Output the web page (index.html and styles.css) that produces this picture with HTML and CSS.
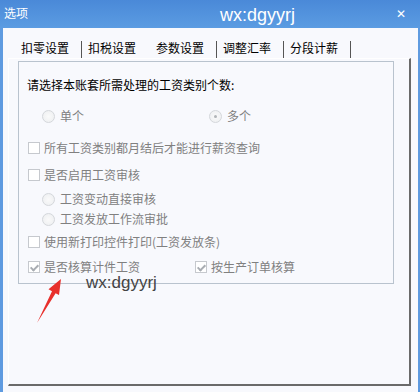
FILE: index.html
```html
<!DOCTYPE html>
<html lang="zh">
<head>
<meta charset="utf-8">
<link rel="stylesheet" href="styles.css">
</head>
<body>
<div class="window">
  <div class="titlebar">
    <span class="title">选项</span>
    <span class="title-mark">wx:dgyyrj</span>
    <span class="close">✕</span>
  </div>
  <div class="client">
    <div class="tabs">
      <span class="tab">扣零设置</span><span class="sep"></span>
      <span class="tab">扣税设置</span>
      <span class="tab active">参数设置</span><span class="sep"></span>
      <span class="tab">调整汇率</span><span class="sep"></span>
      <span class="tab">分段计薪</span><span class="sep"></span>
    </div>
    <div class="panel">
      <div class="group">
        <div class="row label">请选择本账套所需处理的工资类别个数:</div>
        <div class="row r-count">
          <span class="opt radio-opt"><span class="radio"></span>单个</span>
          <span class="opt radio-opt multi"><span class="radio on"></span>多个</span>
        </div>
        <div class="row r1"><span class="check"></span>所有工资类别都月结后才能进行薪资查询</div>
        <div class="row r2"><span class="check"></span>是否启用工资审核</div>
        <div class="row r3 radio-row"><span class="radio"></span>工资变动直接审核</div>
        <div class="row r4 radio-row"><span class="radio"></span>工资发放工作流审批</div>
        <div class="row r5"><span class="check"></span>使用新打印控件打印(工资发放条)</div>
        <div class="row r6">
          <span class="opt"><span class="check on"></span>是否核算计件工资</span>
          <span class="opt order"><span class="check on"></span>按生产订单核算</span>
        </div>
      </div>
    </div>
  </div>
  <div class="watermark">wx:dgyyrj</div>
  <svg class="arrow" width="420" height="392" viewBox="0 0 420 392">
    <polygon points="61,279 59,295 55.6,293.2 37,323 52,291.2 48.5,289.3" fill="#e8302c"/>
  </svg>
</div>
</body>
</html>
```

FILE: styles.css
```css
* { box-sizing: border-box; }
html, body { margin: 0; padding: 0; }
body {
  width: 420px;
  height: 392px;
  overflow: hidden;
  font-family: "Noto Sans CJK SC", "Liberation Sans", sans-serif;
  font-size: 12px;
  background: #f8f9fd;
}
.window {
  position: relative;
  width: 420px;
  height: 392px;
  border-left: 3px solid #5f9be0;
  border-right: 2px solid #5f9be0;
  background: #f8f9fd;
  display: flex;
  flex-direction: column;
}
.titlebar {
  height: 28px;
  margin-left: -3px;
  margin-right: -2px;
  background: linear-gradient(#4a89d8, #5b9ce2);
  color: #fff;
  display: flex;
  align-items: center;
  position: relative;
}
.title {
  font-size: 12px;
  margin-left: 4px;
  margin-top: -3px;
}
.title-mark {
  font-family: "Liberation Sans", Arial, sans-serif;
  font-size: 18px;
  margin-left: 192px;
  margin-top: 3px;
}
.close {
  margin-left: auto;
  margin-right: 14px;
  font-size: 12px;
  font-weight: bold;
  font-family: "DejaVu Sans", sans-serif;
}
.client {
  flex: 1;
  display: flex;
  flex-direction: column;
  padding: 0 7px 6px 5px;
}
.tabs {
  display: flex;
  align-items: center;
  height: 20px;
  margin-top: 10px;
  padding-left: 13px;
  color: #000;
  font-size: 12px;
}
.tab { line-height: 16px; }
.sep {
  width: 1px;
  height: 17px;
  background: #555;
  margin: 2px 6px 0 12px;
}
.tab.active { margin-left: 20px; }
.panel {
  flex: 1;
  border-left: 1px solid #ffffff;
  border-top: 1px solid #ffffff;
  border-right: 2px solid #6a6a6a;
  border-bottom: 2px solid #6a6a6a;
  padding: 2px 15px 0 9px;
}
.group {
  border: 1px solid #b9c3ce;
  height: 223px;
  padding: 15px 8px 0 8px;
  color: #808080;
}
.row {
  display: flex;
  align-items: center;
  height: 16px;
  line-height: 16px;
  white-space: nowrap;
}
.label { color: #000; }
.r-count { margin-top: 15px; padding-left: 15px; }
.r1 { margin-top: 16px; }
.r2 { margin-top: 11px; }
.r3 { margin-top: 8px; }
.r4 { margin-top: 4px; }
.r5 { margin-top: 7px; }
.r6 { margin-top: 9px; }
.radio-row { padding-left: 15px; }
.opt { display: flex; align-items: center; }
.multi { margin-left: 125px; }
.order { margin-left: 54px; }
.check {
  width: 12px;
  height: 12px;
  border: 1px solid #c6c9ce;
  background: #fff;
  margin: 0 4px 0 1px;
  position: relative;
  flex: none;
}
.check.on::after {
  content: "";
  position: absolute;
  left: 3px;
  top: 1px;
  width: 3px;
  height: 6px;
  border: solid #a8acb2;
  border-width: 0 2px 2px 0;
  transform: rotate(45deg);
}
.radio {
  width: 13px;
  height: 13px;
  border-radius: 50%;
  border: 1px solid #d4d7db;
  background: radial-gradient(circle, #fafafa 0%, #eceef0 100%);
  margin-right: 5px;
  position: relative;
  flex: none;
}
.radio.on::after {
  content: "";
  position: absolute;
  left: 4px;
  top: 4px;
  width: 3px;
  height: 3px;
  border-radius: 50%;
  background: #b0b4b8;
}
.watermark {
  position: absolute;
  left: 83px;
  top: 273px;
  font-family: "Liberation Sans", Arial, sans-serif;
  font-size: 17px;
  color: #444;
}
.arrow {
  position: absolute;
  left: -3px;
  top: 0;
}
```
